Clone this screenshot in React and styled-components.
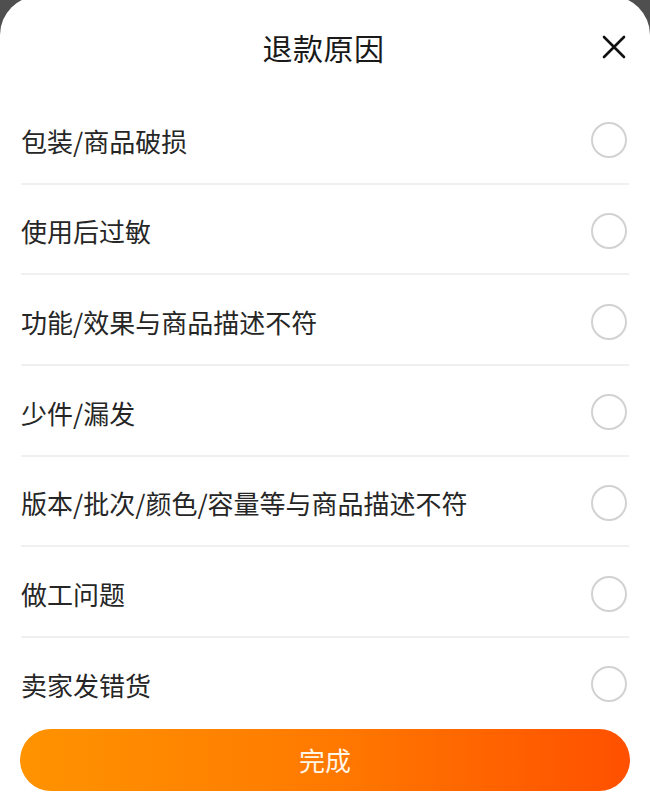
import React, { useState } from 'react';
import styled, { createGlobalStyle } from 'styled-components';

const reasons = [
  '包装/商品破损',
  '使用后过敏',
  '功能/效果与商品描述不符',
  '少件/漏发',
  '版本/批次/颜色/容量等与商品描述不符',
  '做工问题',
  '卖家发错货',
];

function App() {
  const [picked, setPicked] = useState(null);

  return (
    <>
      <GlobalStyle />
      <Sheet>
        <Header>
          <span />
          <Title>退款原因</Title>
          <CloseButton aria-label="关闭">
            <svg width="24" height="24" viewBox="0 0 24 24">
              <path d="M2 2 L22 22 M22 2 L2 22" stroke="#111" strokeWidth="2.6" strokeLinecap="round" fill="none" />
            </svg>
          </CloseButton>
        </Header>

        <ReasonList>
          {reasons.map((r, i) => (
            <ReasonRow key={r} last={i === reasons.length - 1} onClick={() => setPicked(i)}>
              <ReasonText>{r}</ReasonText>
              <Radio checked={picked === i} />
            </ReasonRow>
          ))}
        </ReasonList>

        <DoneButton>完成</DoneButton>
      </Sheet>
    </>
  );
}

const GlobalStyle = createGlobalStyle`
  html, body {
    margin: 0;
    padding: 0;
    background: #4f4f4f;
    overflow: hidden;
  }
  body {
    font-family: "Noto Sans CJK SC", "Noto Sans", sans-serif;
  }
`;

const Sheet = styled.div`
  margin-top: -4px;
  height: 800px;
  background: #fff;
  border-radius: 39px 39px 0 0;
  display: flex;
  flex-direction: column;
  box-sizing: border-box;
`;

const Header = styled.div`
  height: 98px;
  padding: 4px 24px 0 21px;
  box-sizing: border-box;
  display: grid;
  grid-template-columns: 1fr auto 1fr;
  align-items: center;
`;

const Title = styled.div`
  font-size: 30px;
  color: #1a1a1a;
  letter-spacing: 0.5px;
`;

const CloseButton = styled.button`
  justify-self: end;
  border: none;
  background: none;
  padding: 0;
  width: 24px;
  height: 24px;
  display: flex;
  cursor: pointer;
`;

const ReasonList = styled.div`
  padding: 0 21px;
`;

const ReasonRow = styled.div`
  height: 90.67px;
  box-sizing: border-box;
  display: flex;
  align-items: center;
  justify-content: space-between;
  border-bottom: ${p => (p.last ? 'none' : '2px solid #f0f0f0')};
  padding-top: ${p => (p.last ? '2px' : '4px')};
  cursor: pointer;
`;

const ReasonText = styled.span`
  font-size: 26px;
  color: #262626;
`;

const Radio = styled.span`
  width: 36px;
  height: 36px;
  box-sizing: border-box;
  border-radius: 50%;
  border: 2px solid ${p => (p.checked ? '#ff5000' : '#d2d2d2')};
  background: ${p => (p.checked ? '#ff5000' : '#fff')};
  margin-right: 2px;
`;

const DoneButton = styled.button`
  margin: 0 20px;
  height: 62px;
  border: none;
  border-radius: 31px;
  background: linear-gradient(90deg, #ff9300 0%, #ff7a00 50%, #ff5000 100%);
  color: #fff6e6;
  font-family: "Noto Sans CJK SC", "Noto Sans", sans-serif;
  font-size: 26px;
  cursor: pointer;
`;

export default App;
